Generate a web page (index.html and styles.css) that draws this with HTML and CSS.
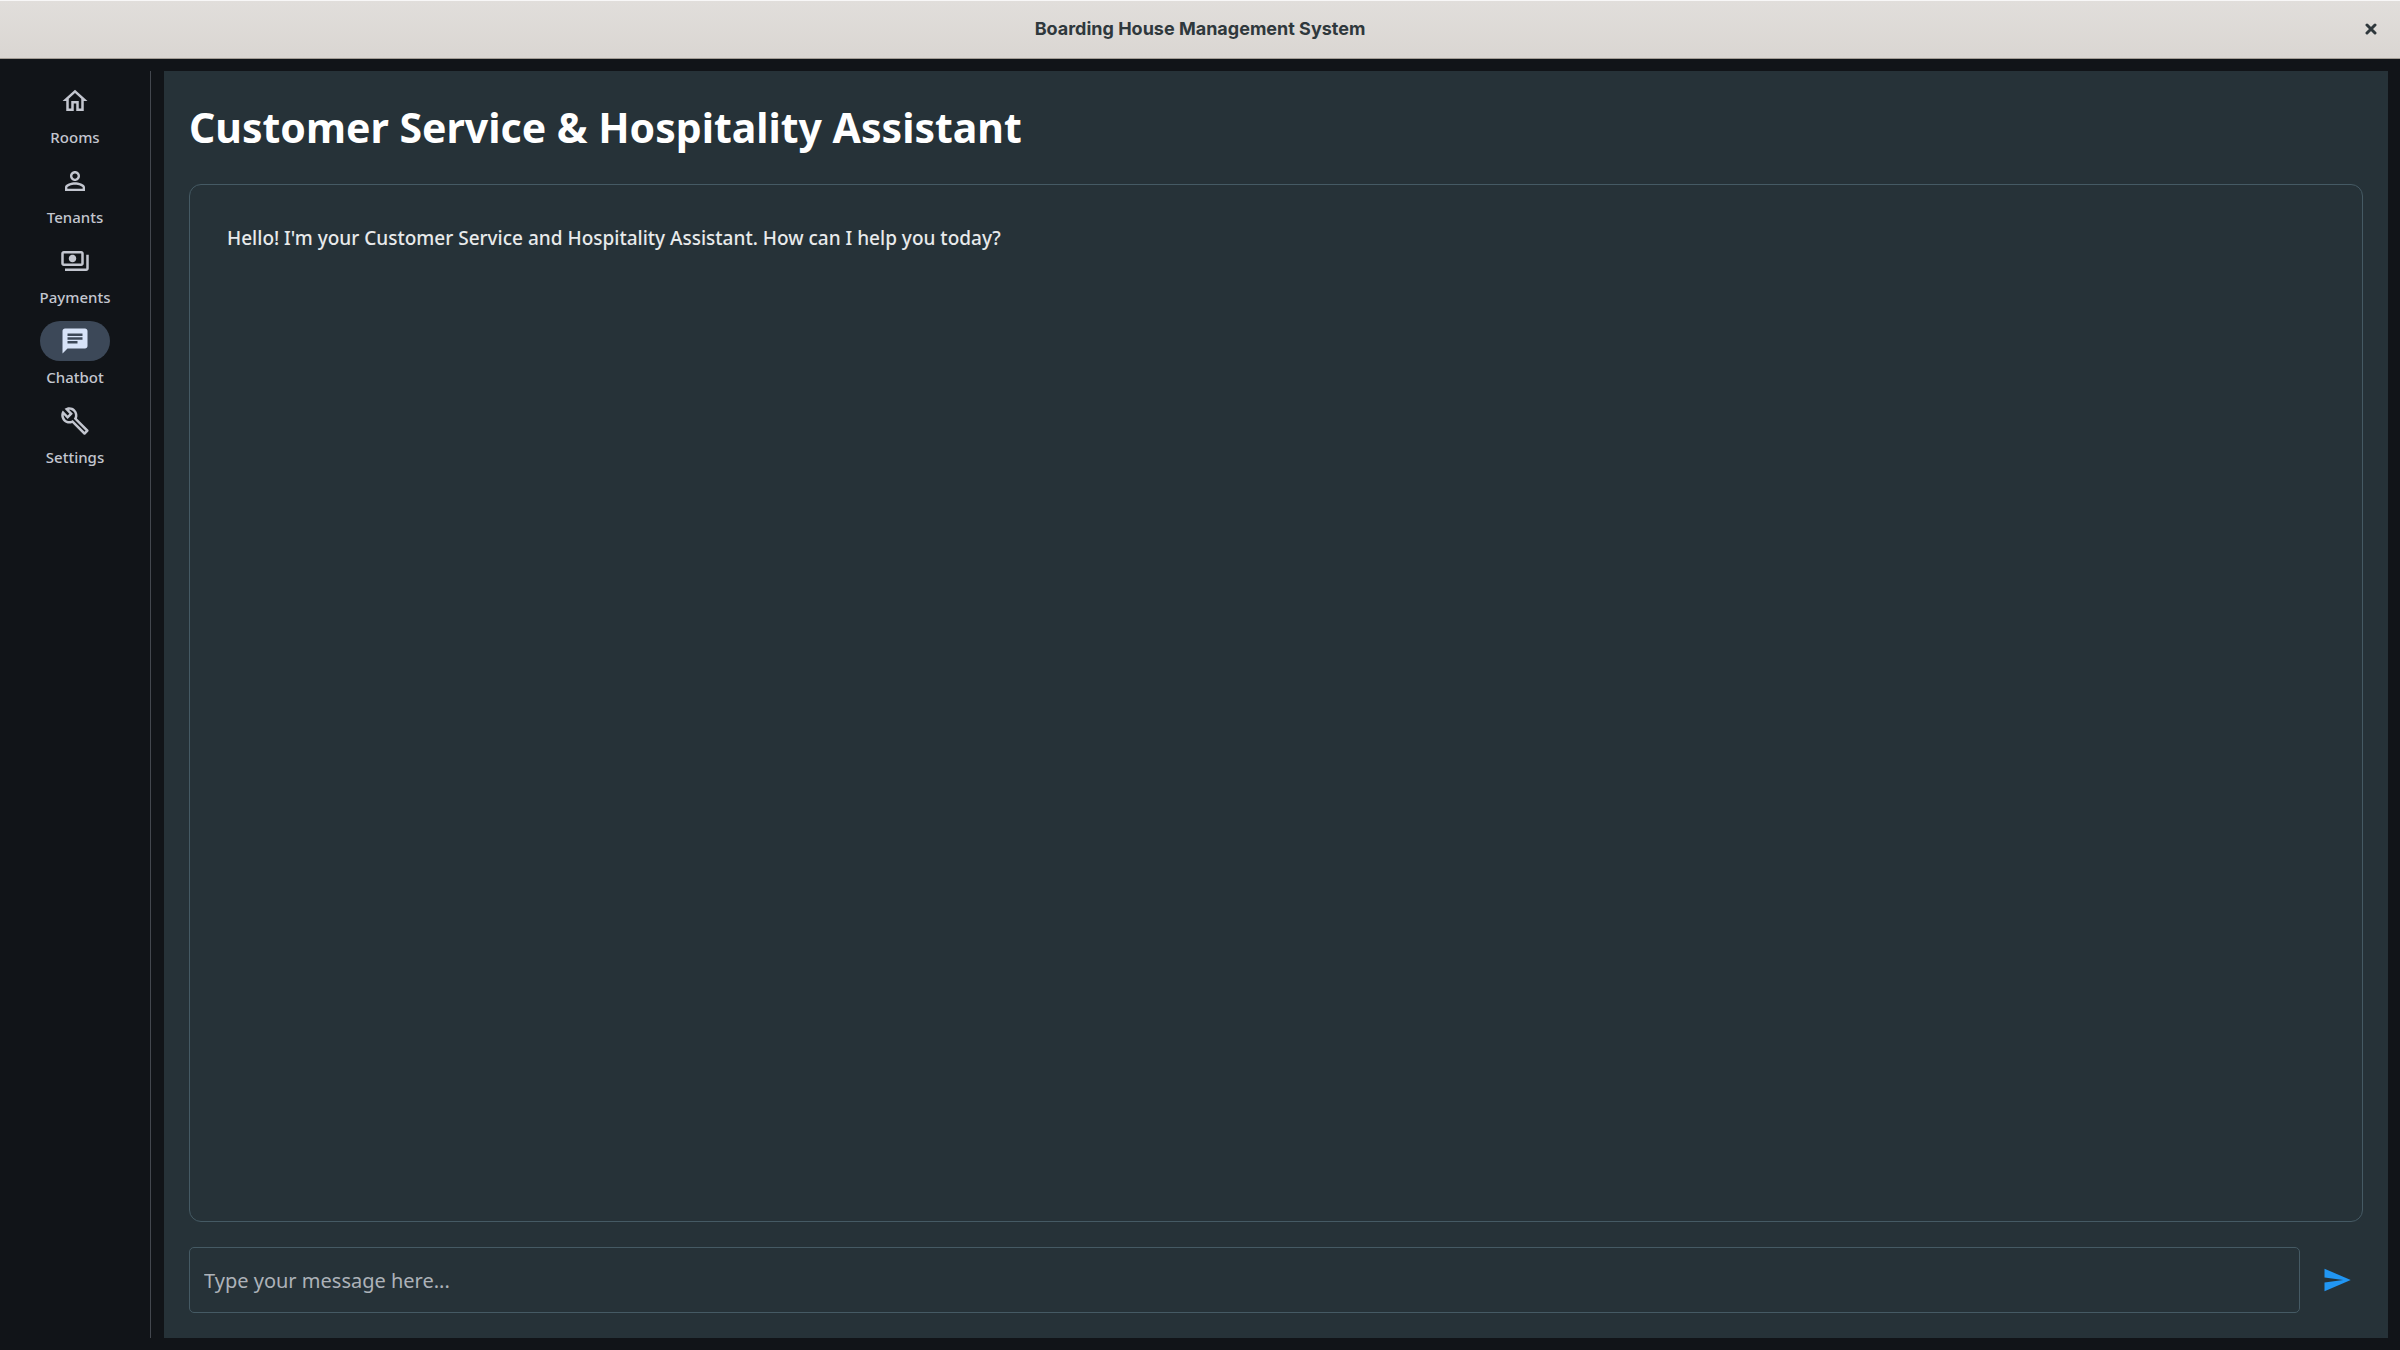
FILE: index.html
```html
<!DOCTYPE html>
<html lang="en">
<head>
<meta charset="utf-8">
<meta name="viewport" content="width=device-width, initial-scale=1">
<title>Boarding House Management System</title>
<link rel="stylesheet" href="styles.css">
</head>
<body>
<header class="titlebar">
  <span class="titlebar-text">Boarding House Management System</span>
  <button class="close" type="button" aria-label="Close">
    <svg viewBox="0 0 12 12" width="12" height="12"><path d="M2 2l8 8M10 2l-8 8" fill="none" stroke="currentColor" stroke-width="3" stroke-linecap="round"/></svg>
  </button>
</header>
<div class="app">
  <nav class="rail">
    <a class="rail-item" href="#rooms">
      <span class="rail-icon"><svg class="icon" viewBox="0 0 24 24"><path d="M12 5.69l5 4.5V18h-2v-6H9v6H7v-7.81l5-4.5M12 3L2 12h3v8h6v-6h2v6h6v-8h3L12 3z"/></svg></span>
      <span>Rooms</span>
    </a>
    <a class="rail-item" href="#tenants">
      <span class="rail-icon"><svg class="icon" viewBox="0 0 24 24"><path d="M12 5.9c1.16 0 2.1.94 2.1 2.1s-.94 2.1-2.1 2.1S9.9 9.16 9.9 8s.94-2.1 2.1-2.1m0 9c2.97 0 6.1 1.46 6.1 2.1v1.1H5.9V17c0-.64 3.13-2.1 6.1-2.1M12 4C9.79 4 8 5.79 8 8s1.79 4 4 4 4-1.79 4-4-1.79-4-4-4zm0 9c-2.67 0-8 1.34-8 4v3h16v-3c0-2.66-5.33-4-8-4z"/></svg></span>
      <span>Tenants</span>
    </a>
    <a class="rail-item" href="#payments">
      <span class="rail-icon"><svg class="icon" viewBox="0 0 24 24"><path d="M19 14V6c0-1.1-.9-2-2-2H3c-1.1 0-2 .9-2 2v8c0 1.1.9 2 2 2h14c1.1 0 2-.9 2-2zm-2 0H3V6h14v8zm-7-7c-1.66 0-3 1.34-3 3s1.34 3 3 3 3-1.34 3-3-1.34-3-3-3zm13 0v11c0 1.1-.9 2-2 2H4v-2h17V7h2z"/></svg></span>
      <span>Payments</span>
    </a>
    <a class="rail-item rail-item-active" href="#chatbot" aria-current="page">
      <span class="rail-icon"><svg class="icon" viewBox="0 0 24 24"><path d="M20 2H4c-1.1 0-1.99.9-1.99 2L2 22l4-4h14c1.1 0 2-.9 2-2V4c0-1.1-.9-2-2-2zM6 9h12v2H6V9zm8 5H6v-2h8v2zm4-6H6V6h12v2z"/></svg></span>
      <span>Chatbot</span>
    </a>
    <a class="rail-item" href="#settings">
      <span class="rail-icon"><svg class="icon" viewBox="0 0 24 24"><path d="M22.61 18.99l-9.08-9.08c.93-2.34.45-5.1-1.44-7C9.79.61 6.21.4 3.66 2.26L7.5 6.11 6.08 7.52 2.25 3.69C.39 6.23.6 9.82 2.9 12.11c1.86 1.86 4.57 2.35 6.89 1.48l9.11 9.11c.39.39 1.02.39 1.41 0l2.3-2.3c.4-.38.4-1.01 0-1.41zm-3 1.6l-9.46-9.46c-.61.45-1.29.72-2 .82-1.36.2-2.79-.21-3.83-1.25C3.37 9.76 2.93 8.5 3 7.26l3.09 3.09 4.24-4.24-3.09-3.09c1.24-.07 2.49.37 3.44 1.31 1.08 1.08 1.49 2.57 1.24 3.96-.12.71-.42 1.37-.88 1.96l9.45 9.45-.88.89z"/></svg></span>
      <span>Settings</span>
    </a>
  </nav>
  <main class="panel">
    <h1 class="heading">Customer Service &amp; Hospitality Assistant</h1>
    <section class="chat">
      <p class="message">Hello! I'm your Customer Service and Hospitality Assistant. How can I help you today?</p>
    </section>
    <form class="composer">
      <input class="composer-input" type="text" aria-label="Message" placeholder="Type your message here...">
      <button class="send" type="button" aria-label="Send">
        <svg class="icon" viewBox="0 0 24 24"><path d="M2.01 21L23 12 2.01 3 2 10l15 2-15 2z"/></svg>
      </button>
    </form>
  </main>
</div>
</body>
</html>
```

FILE: styles.css
```css
* { box-sizing: border-box; }

body {
  margin: 0;
  min-height: 100vh;
  display: flex;
  flex-direction: column;
  background: #111418;
  font-family: "Noto Sans", sans-serif;
}

button {
  padding: 0;
  border: 0;
  background: none;
  display: grid;
  place-items: center;
  cursor: pointer;
}

.icon {
  width: 30px;
  height: 30px;
  display: block;
  fill: currentColor;
}

.titlebar {
  height: 59px;
  padding: 0 12px 2px;
  display: grid;
  grid-template-columns: 1fr auto 1fr;
  align-items: center;
  border-top: 1px solid #f8f7f7;
  border-bottom: 1px solid #a39c95;
  background: linear-gradient(#e1dedb, #dad6d2);
  color: #2f383c;
}

.titlebar-text {
  grid-column: 2;
  font: 700 18px/24px Inter, sans-serif;
}

.close {
  width: 34px;
  height: 34px;
  justify-self: end;
  color: #2f383c;
}

.app {
  flex: 1;
  padding: 12px 12px 12px 0;
  display: flex;
  gap: 13px;
}

.rail {
  width: 151px;
  padding: 10px 0;
  display: flex;
  flex-direction: column;
  gap: 14px;
  border-right: 1px solid #43474e;
}

.rail-item {
  display: flex;
  flex-direction: column;
  align-items: center;
  gap: 6px;
  color: #c3c6cf;
  font-size: 15px;
  font-weight: 500;
  line-height: 20px;
  text-decoration: none;
}

.rail-icon {
  width: 70px;
  height: 40px;
  border-radius: 20px;
  display: grid;
  place-items: center;
}

.rail-item-active .rail-icon {
  background: #3c4858;
  color: #d7e3f8;
}

.panel {
  flex: 1;
  min-width: 0;
  padding: 25px;
  display: flex;
  flex-direction: column;
  gap: 25px;
  background: #263238;
}

.heading {
  margin: 0;
  color: #fff;
  font-size: 41px;
  font-weight: 700;
  line-height: 63px;
}

.chat {
  flex: 1;
  padding: 37px;
  border: 1px solid #455a64;
  border-radius: 12px;
}

.message {
  margin: 0;
  color: #e8eaeb;
  font-size: 19px;
  font-weight: 500;
  line-height: 32px;
}

.composer {
  display: flex;
  align-items: center;
  gap: 11px;
}

.composer-input {
  flex: 1;
  min-width: 0;
  height: 66px;
  padding: 0 14px;
  border: 1px solid #455a64;
  border-radius: 5px;
  background: transparent;
  color: #fff;
  font: 20px/30px "Noto Sans", sans-serif;
}

.composer-input::placeholder {
  color: #adb2b9;
  opacity: 1;
}

.send {
  width: 52px;
  height: 50px;
  color: #2196f3;
}
```
